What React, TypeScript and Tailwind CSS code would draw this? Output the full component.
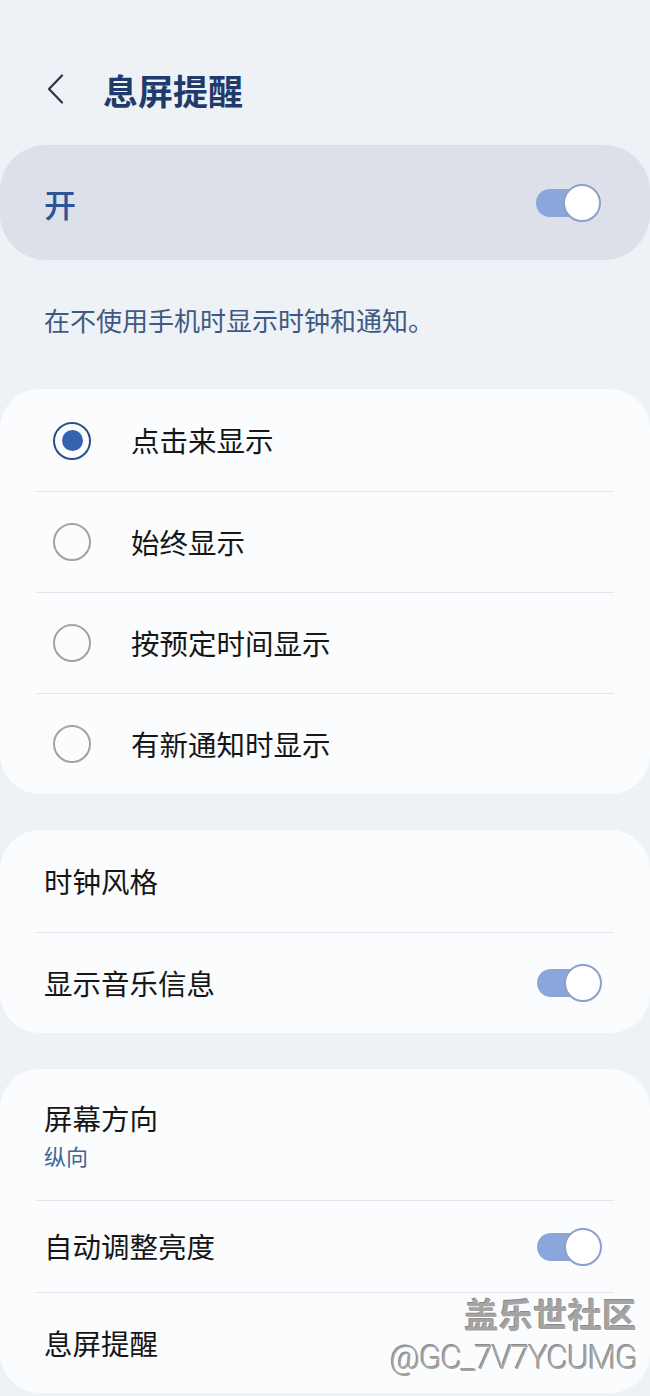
import type { ReactNode } from "react";

// ─── Shared bits ──────────────────────────────────────────────────────────────

const cjk = "font-['Noto_Sans_CJK_SC','Noto_Sans',sans-serif]";

function Toggle() {
  return (
    <div className="relative w-[65px] h-[38px] shrink-0">
      <div className="absolute left-0 top-[5px] w-[56px] h-[28px] rounded-full bg-[#8ba6da]" />
      <div className="absolute right-0 top-0 w-[38px] h-[38px] rounded-full bg-white border-2 border-[#8e9fc9]" />
    </div>
  );
}

function Radio({ checked }: { checked?: boolean }) {
  return checked ? (
    <div className="w-[38px] h-[38px] rounded-full border-[2.5px] border-[#2d4f87] flex items-center justify-center shrink-0">
      <div className="w-[21px] h-[21px] rounded-full bg-[#3563ad]" />
    </div>
  ) : (
    <div className="w-[38px] h-[38px] rounded-full border-2 border-[#a3a3a3] shrink-0" />
  );
}

function Card({ children }: { children: ReactNode }) {
  return (
    <div className="rounded-[40px] bg-[#fbfcfd] pt-[1px]">
      <div className="mx-[36px]">{children}</div>
    </div>
  );
}

function Row({
  children,
  first,
  h = "h-[101px]",
}: {
  children: ReactNode;
  first?: boolean;
  h?: string;
}) {
  return (
    <div
      className={`${h} flex items-center ${
        first ? "" : "border-t border-[#e4e6e9]"
      }`}
    >
      {children}
    </div>
  );
}

// ─── Page ─────────────────────────────────────────────────────────────────────

const options = ["点击来显示", "始终显示", "按预定时间显示", "有新通知时显示"];

export default function App() {
  return (
    <div
      className={`${cjk} relative w-full h-[1396px] overflow-hidden bg-[#eef1f5]`}
    >
      {/* Header */}
      <div className="mt-[59px] h-[60px] flex items-center">
        <svg
          viewBox="0 0 18 30"
          className="ml-[46px] w-[18px] h-[30px]"
          fill="none"
          stroke="#2c3344"
          strokeWidth="2.2"
          strokeLinecap="round"
          strokeLinejoin="round"
        >
          <path d="M16 1.5 3 15l13 13.5" />
        </svg>
        <h1 className="ml-[39px] text-[35px] font-bold text-[#1f3b6c] leading-none">
          息屏提醒
        </h1>
      </div>

      {/* Master switch */}
      <div className="mt-[26px] h-[115px] rounded-[46px] bg-[#dce0e8] flex items-center justify-between pl-[44px] pr-[49px]">
        <span className="text-[32px] font-medium text-[#2b5597] leading-none">
          开
        </span>
        <Toggle />
      </div>

      <p className="mt-[42px] ml-[44px] text-[26px] leading-[36px] text-[#3d5a82]">
        在不使用手机时显示时钟和通知。
      </p>

      <div className="mt-[51px] flex flex-col gap-[36px]">
        {/* Display mode */}
        <Card>
          {options.map((label, i) => (
            <Row key={label} first={i === 0}>
              <div className="pl-[17px]">
                <Radio checked={i === 0} />
              </div>
              <span className="ml-[40px] text-[28.5px] text-[#161616]">
                {label}
              </span>
            </Row>
          ))}
        </Card>

        {/* Clock */}
        <Card>
          <Row first>
            <span className="pl-[8px] text-[28.5px] text-[#161616]">时钟风格</span>
          </Row>
          <Row>
            <span className="pl-[8px] flex-1 text-[28.5px] text-[#161616]">
              显示音乐信息
            </span>
            <div className="mr-[12px]">
              <Toggle />
            </div>
          </Row>
        </Card>

        {/* Screen */}
        <Card>
          <Row first h="h-[130px]">
            <div className="pl-[8px] flex flex-col">
              <span className="text-[28.5px] leading-[36px] text-[#161616]">
                屏幕方向
              </span>
              <span className="mt-[4px] text-[22px] leading-[30px] text-[#3d6696]">
                纵向
              </span>
            </div>
          </Row>
          <Row h="h-[92px]">
            <span className="pl-[8px] flex-1 text-[28.5px] text-[#161616]">
              自动调整亮度
            </span>
            <div className="mr-[12px]">
              <Toggle />
            </div>
          </Row>
          <Row h="h-[101px]">
            <span className="pl-[8px] text-[28.5px] text-[#161616]">息屏提醒</span>
          </Row>
        </Card>
      </div>

      {/* Watermark */}
      <div className="absolute right-[13px] top-[1291px] flex flex-col items-end text-[#a4a4a4] [text-shadow:1px_1px_0_#ffffff,-1px_-1px_0_#8a8a8a]">
        <span className="text-[34px] font-bold leading-[46px] tracking-[0.5px]">
          盖乐世社区
        </span>
        <span className="font-['Roboto',sans-serif] font-light text-[33px] leading-[42px] tracking-[-1px]">
          @GC_7V7YCUMG
        </span>
      </div>
    </div>
  );
}
